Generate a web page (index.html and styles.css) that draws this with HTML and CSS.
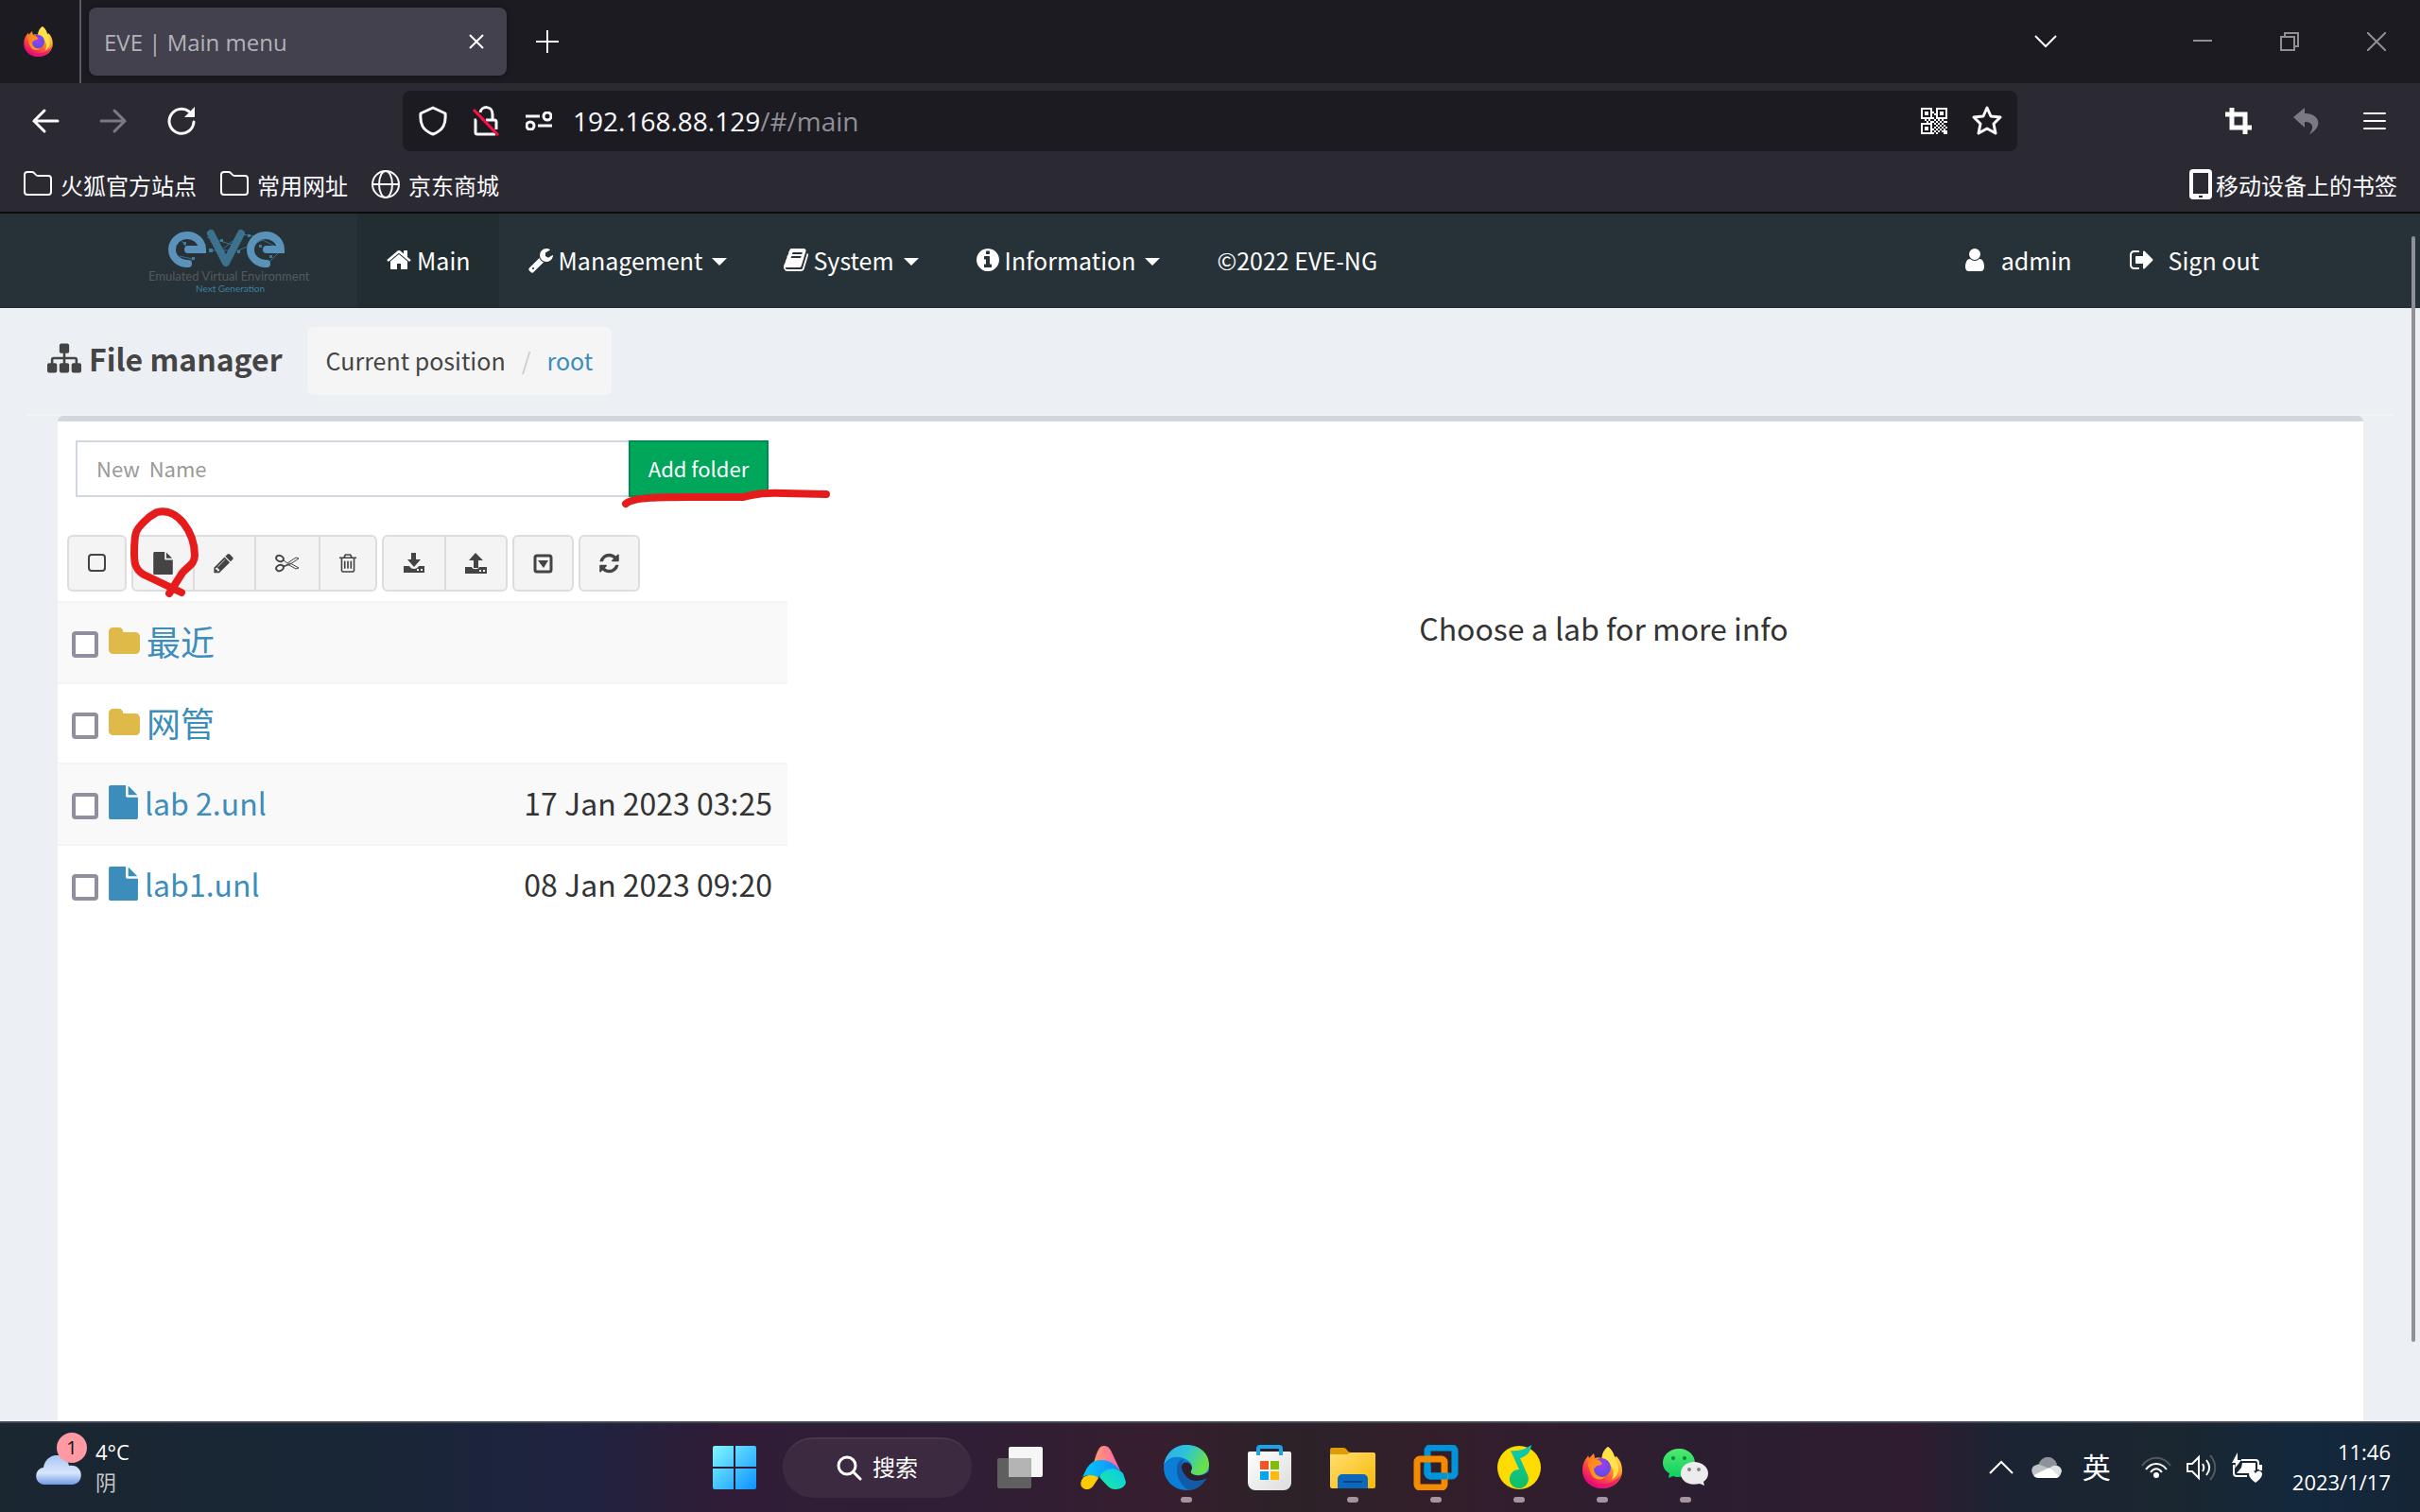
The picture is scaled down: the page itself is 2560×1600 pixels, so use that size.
FILE: index.html
```html
<!DOCTYPE html>
<html lang="zh-CN">
<head>
<meta charset="utf-8">
<title>EVE | Main menu</title>
<link rel="stylesheet" href="styles.css">
</head>
<body>
<svg class="defs" width="0" height="0" aria-hidden="true">
  <defs>
    <linearGradient id="ffFlame" x1="0.85" y1="0.05" x2="0.2" y2="0.95"><stop offset="0" stop-color="#fff44f"/><stop offset=".35" stop-color="#ffa52a"/><stop offset=".65" stop-color="#ff4f3e"/><stop offset="1" stop-color="#e4007c"/></linearGradient>
    <radialGradient id="ffGlobe" cx=".5" cy=".35" r=".65"><stop offset="0" stop-color="#a03cf5"/><stop offset="1" stop-color="#5b4ee0"/></radialGradient>
    <linearGradient id="ffHead" x1="0" y1="0" x2="1" y2="1"><stop offset="0" stop-color="#ff7a1c"/><stop offset="1" stop-color="#ffa61e"/></linearGradient>
    <linearGradient id="winBlue" x1="0" y1="0" x2="46" y2="46" gradientUnits="userSpaceOnUse"><stop offset="0" stop-color="#82f8ff"/><stop offset="1" stop-color="#0c92ff"/></linearGradient>
    <linearGradient id="edgeTop" x1="0" y1="0" x2="1" y2=".4"><stop offset="0" stop-color="#2eaaf0"/><stop offset=".5" stop-color="#2cc4d8"/><stop offset="1" stop-color="#68e04a"/></linearGradient>
    <linearGradient id="storeBag" x1="0" y1="0" x2="1" y2="1"><stop offset="0" stop-color="#fff"/><stop offset="1" stop-color="#dcdcdc"/></linearGradient>
    <linearGradient id="folderY" x1="0" y1="0" x2="1" y2="1"><stop offset="0" stop-color="#ffdf70"/><stop offset="1" stop-color="#fab806"/></linearGradient>
    <linearGradient id="noteG" x1="0" y1="0" x2="0" y2="1"><stop offset="0" stop-color="#0fc9b8"/><stop offset="1" stop-color="#11bf62"/></linearGradient>
    <linearGradient id="aPink" x1="0" y1="0" x2="1" y2="0"><stop offset="0" stop-color="#ff9d70"/><stop offset="1" stop-color="#ff61ad"/></linearGradient>
    <linearGradient id="aBlue" x1="0" y1="0" x2="1" y2="0"><stop offset="0" stop-color="#00cdf5"/><stop offset="1" stop-color="#1a86ff"/></linearGradient>
    <linearGradient id="aTeal" x1="0" y1="1" x2="1" y2="0"><stop offset="0" stop-color="#1de9a0"/><stop offset="1" stop-color="#07cbea"/></linearGradient>
    <linearGradient id="cloudB" x1="0" y1="0" x2="0" y2="1"><stop offset="0" stop-color="#a9c4f5"/><stop offset=".6" stop-color="#d8e6fb"/><stop offset="1" stop-color="#6f9be8"/></linearGradient>
    <linearGradient id="chatG" x1="0" y1="0" x2="0" y2="1"><stop offset="0" stop-color="#4fea6d"/><stop offset="1" stop-color="#0dcf62"/></linearGradient>
    <symbol id="firefox" viewBox="0 0 42 44">
      <path fill="url(#ffFlame)" d="M27 0c4 3 6 7 7 11l2-1c4 4 6 9 6 15 0 11-9 19-21 19S0 36 0 25c0-6 2-11 5-14l1-2 1 3 5-5 1 5c2-1 5-1 7 0 1-5 4-9 7-12z"/>
      <path fill="#e4107c" opacity=".7" d="M1 29c4 8 12 11 20 10 9 0 16-4 20-10-2 9-10 15-20 15S3 38 1 29z"/>
      <path fill="#ffe14a" d="M27 0c7 5 6 11 9 15 4 8 2 16-5 20 3-6 2-11-1-15-3-5-9-6-9-10 0-4 3-8 6-10z"/>
      <circle cx="20" cy="22" r="10" fill="url(#ffGlobe)"/>
      <path fill="url(#ffHead)" d="M5 11l3 2 4-5 1 5c4 0 7 3 8 5-2 1-3 2-6 2 0 2-3 2-3 4 1 6 6 9 12 8-4 4-11 3-14-2C7 25 5 17 5 11z"/>
    </symbol>
    <symbol id="file" viewBox="128 0 1536 1792"><path d="M1152 512v-472q22 14 36 28l408 408q14 14 28 36h-472zm-128 32q0 40 28 68t68 28h544v1056q0 40-28 68t-68 28h-1344q-40 0-68-28t-28-68v-1600q0-40 28-68t68-28h800v544z"/></symbol>
    <symbol id="folder" viewBox="64 128 1664 1408"><path d="M1728 608v704q0 92-66 158t-158 66h-1216q-92 0-158-66t-66-158v-960q0-92 66-158t158-66h320q92 0 158 66t66 158v32h672q92 0 158 66t66 158z"/></symbol>
    <symbol id="bmfolder" viewBox="0 0 32 32"><path fill="none" stroke="#fbfbfe" stroke-width="2" stroke-linejoin="round" d="M2 24V6a3 3 0 0 1 3-3h5c3 0 3 4 6 4h11a3 3 0 0 1 3 3v14a3 3 0 0 1-3 3H5a3 3 0 0 1-3-3z"/></symbol>
  </defs>
</svg>

<header class="browser">
  <div class="tabs">
    <div class="brand"><svg width="31" height="32"><use href="#firefox"/></svg></div>
    <div class="tab"><span>EVE | Main menu</span><button class="bare close" aria-label="Close tab"><svg width="16" height="16" viewBox="0 0 16 16" fill="none" stroke="#fbfbfe" stroke-width="2"><path d="M1 1l14 14M15 1L1 15"/></svg></button></div>
    <button class="bare" aria-label="New tab"><svg width="24" height="24" viewBox="0 0 24 24" stroke="#fbfbfe" stroke-width="2"><path d="M12 0v24M0 12h24"/></svg></button>
    <div class="winctl">
      <button class="bare list" aria-label="List all tabs"><svg width="24" height="14" viewBox="0 0 24 14" fill="none" stroke="#fbfbfe" stroke-width="2"><path d="M1 1l11 11L23 1"/></svg></button>
      <button class="bare" aria-label="Minimize"><svg width="20" height="20" viewBox="0 0 20 20" stroke="#8f8f94" stroke-width="2"><path d="M0 9h20"/></svg></button>
      <button class="bare" aria-label="Restore"><svg width="20" height="20" viewBox="0 0 20 20" fill="none" stroke="#8f8f94" stroke-width="2"><path d="M1 5h14v14H1zM5 5V1h14v14h-4"/></svg></button>
      <button class="bare" aria-label="Close"><svg width="20" height="20" viewBox="0 0 20 20" stroke="#8f8f94" stroke-width="2"><path d="M0 0l20 20M20 0L0 20"/></svg></button>
    </div>
  </div>
  <div class="toolbar">
    <button class="bare" aria-label="Back"><svg width="30" height="28" viewBox="0 0 30 28" fill="none" stroke="#fbfbfe" stroke-width="3" stroke-linecap="round"><path d="M28 14H3M14 3L3 14l11 11"/></svg></button>
    <button class="bare" aria-label="Forward"><svg width="30" height="28" viewBox="0 0 30 28" fill="none" stroke="#7b7a83" stroke-width="3" stroke-linecap="round"><path d="M2 14h25M16 3l11 11-11 11"/></svg></button>
    <button class="bare" aria-label="Reload"><svg width="30" height="30" viewBox="0 0 30 30"><path fill="none" stroke="#fbfbfe" stroke-width="3" stroke-linecap="round" d="M28 16a13 13 0 1 1-5-11"/><path fill="#fbfbfe" d="M29 0v10a1 1 0 0 1-1 1H18z"/></svg></button>
    <form class="url">
      <button type="button" class="bare" aria-label="Tracking protection"><svg width="30" height="32" viewBox="0 0 30 32" fill="none" stroke="#fbfbfe" stroke-width="3" stroke-linejoin="round"><path d="M15 2l13 6c1 11-2 18-13 22C4 26 1 19 2 8z"/></svg></button>
      <button type="button" class="bare" aria-label="Connection not secure"><svg width="28" height="32" viewBox="0 0 28 32" fill="none" stroke="#fbfbfe" stroke-width="3"><path d="M8 7c1-7 13-8 13 2v6M4 15h-1v13a2 2 0 0 0 2 2h19M14 15h9a2 2 0 0 1 2 2v8"/><path stroke="#ff0f43" d="M1 4l26 27"/></svg></button>
      <button type="button" class="bare" aria-label="Permissions"><svg width="28" height="20" viewBox="0 0 28 20" fill="none" stroke="#fbfbfe" stroke-width="3"><path d="M0 5h15M13 15h15"/><circle cx="23" cy="5" r="4"/><circle cx="5" cy="15" r="4"/></svg></button>
      <p class="address">192.168.88.129<span>/#/main</span></p>
      <button type="button" class="bare" aria-label="QR code"><svg width="28" height="28" viewBox="0 0 14 14" fill="#fbfbfe"><path fill-rule="evenodd" d="M0 0h6v6H0zM1 1v4h4V1zM8 0h6v6H8zM9 1v4h4V1zM0 8h6v6H0zM1 9v4h4V9z"/><path d="M2 2h2v2H2zM10 2h2v2h-2zM2 10h2v2H2zM6 2h1v1H6zM7 3h1v1H7zM6 5h1v1H6zM2 6h1v1H2zM4 6h1v1H4zM3 7h1v1H3zM5 7h1v1H5zM7 6h1v1H7zM9 6h1v1H9zM11 6h1v1h-1zM6 7h1v1H6zM8 7h1v1H8zM10 7h1v1h-1zM12 7h2v1h-2zM7 8h1v1H7zM9 8h1v1H9zM11 8h1v1h-1zM8 9h1v1H8zM10 9h1v1h-1zM12 9h1v1h-1zM7 10h1v1H7zM9 10h1v1H9zM11 10h1v1h-1zM13 10h1v1h-1zM6 11h1v1H6zM8 11h1v1H8zM10 11h1v1h-1zM12 11h1v1h-1zM7 12h1v1H7zM9 12h1v1H9zM11 12h1v1h-1zM6 13h1v1H6zM8 13h1v1H8zM12 12h2v2h-2z"/></svg></button>
      <button type="button" class="bare" aria-label="Bookmark this page"><svg width="32" height="32" viewBox="0 0 32 32" fill="none" stroke="#fbfbfe" stroke-width="3" stroke-linejoin="round"><path d="M16 2l4 9 10 1-7 7 2 10-9-5-9 5 2-10-7-7 10-1z"/></svg></button>
    </form>
    <button class="bare" aria-label="Screenshot"><svg width="28" height="28" viewBox="0 0 28 28" fill="none" stroke="#fbfbfe" stroke-width="5"><path d="M7 0v21h21M0 7h21v21"/></svg></button>
    <button class="bare" aria-label="Undo"><svg width="28" height="28" viewBox="0 0 28 28" fill="#7b7a83"><path d="M12 0v6c16 0 20 14 5 22 6-8 3-13-5-13v6L0 10z"/></svg></button>
    <button class="bare" aria-label="Menu"><svg width="24" height="20" viewBox="0 0 24 20" stroke="#fbfbfe" stroke-width="2" stroke-linecap="round"><path d="M1 2h22M1 10h22M1 18h22"/></svg></button>
  </div>
  <nav class="bookmarks">
    <a href="#"><svg width="32" height="32"><use href="#bmfolder"/></svg>火狐官方站点</a>
    <a href="#"><svg width="32" height="32"><use href="#bmfolder"/></svg>常用网址</a>
    <a href="#"><svg width="32" height="32" viewBox="0 0 32 32" fill="none" stroke="#fbfbfe" stroke-width="2"><circle cx="16" cy="16" r="14"/><ellipse cx="16" cy="16" rx="7" ry="14"/><path d="M2 16h28"/></svg>京东商城</a>
    <a href="#" class="mobile"><svg width="24" height="32" viewBox="0 0 24 32"><path fill="#fbfbfe" fill-rule="evenodd" d="M4 0h16a4 4 0 0 1 4 4v24a4 4 0 0 1-4 4H4a4 4 0 0 1-4-4V4a4 4 0 0 1 4-4zm0 4v22h16V4zm6 24v2h4v-2z"/></svg>移动设备上的书签</a>
  </nav>
</header>

<div class="page">
  <header class="eve">
    <a href="#" class="logo" aria-label="EVE"><svg width="184" height="74" viewBox="155 236 184 74">
      <g stroke="#3d6f8c" stroke-width="1" fill="none"><path d="M219 251l27 8M190 271l13 3M192 255l5 6M204 274l-6 8M222 265h10l20 0 26-11 20 10M256 248l20 3M300 262l-16 16M246 255l-12 10"/></g>
      <g fill="#3f7c9a"><path d="M221 263h4v4h-4zM233 253h3v3h-3zM262 248h3v3h-3zM251 265h3v3h-3zM274 259h3v3h-3zM285 270h3v3h-3zM203 272h3v3h-3zM194 256h3v3h-3z"/></g>
      <path d="M223 247l16 31 16-31" fill="none" stroke="#3c728f" stroke-width="8" stroke-linecap="round" stroke-linejoin="round"/>
      <g fill="none" stroke="#5b92ba" stroke-width="8" stroke-linecap="round"><path d="M199 264h15a16 15 0 1 0-15 15"/><path d="M282 264h15a16 15 0 1 0-15 15"/></g>
      <text x="157" y="297" class="lg1">Emulated Virtual Environment</text>
      <text x="207" y="309" class="lg2">Next Generation</text>
    </svg></a>
    <nav>
      <a href="#" class="active"><svg width="28" height="28" viewBox="0 0 1792 1792"><path d="M1472 992v480q0 26-19 45t-45 19h-384v-384h-256v384h-384q-26 0-45-19t-19-45v-480q0-1 .5-3t.5-3l575-474 575 474q1 2 1 6zm223-69l-62 74q-8 9-21 11h-3q-13 0-21-7l-692-577-692 577q-12 8-24 7-13-2-21-11l-62-74q-8-10-7-23.5t11-21.5l719-599q32-26 76-26t76 26l244 204v-195q0-14 9-23t23-9h192q14 0 23 9t9 23v408l219 182q10 8 11 21.5t-7 23.5z"/></svg>Main</a>
      <a href="#"><svg width="28" height="28" viewBox="0 0 1792 1792"><path d="M448 1472q0-26-19-45t-45-19-45 19-19 45 19 45 45 19 45-19 19-45zm644-420l-682 682q-37 37-90 37-52 0-91-37l-106-108q-38-36-38-90 0-53 38-91l681-681q39 98 114.5 173.5t173.5 114.5zm634-435q0 39-23 106-47 134-164.5 217.5t-258.5 83.5q-185 0-316.5-131.5t-131.5-316.5 131.5-316.5 316.5-131.5q58 0 121.5 16.5t107.5 46.5q16 11 16 28t-16 28l-293 169v224l193 107q5-3 79-48.5t135.5-81 70.5-35.5q15 0 23.5 10t8.5 25z"/></svg>Management<i class="caret"></i></a>
      <a href="#"><svg width="26" height="28" viewBox="64 0 1664 1792"><path d="M1703 478q40 57 18 129l-275 906q-19 64-76.5 107.5t-122.5 43.5h-923q-77 0-148.5-53.5t-99.5-131.5q-24-67-2-127 0-4 3-27t4-37q1-8-3-21.5t-3-19.5q2-11 8-21t16.5-23.5 16.5-23.5q23-38 45-91.5t30-91.5q3-10 .5-30t-.5-28q3-11 17-28t17-23q21-36 42-92t25-90q1-9-2.5-32t.5-28q4-13 22-30.5t22-22.5q19-26 42.5-84.5t27.5-96.5q1-8-3-25.5t-2-26.5q2-8 9-18t18-23 17-21q8-12 16.5-30.5t15-35 16-36 19.5-32 26.5-23.5 36-11.5 47.5 5.5l-1 3q38-9 51-9h761q74 0 114 56t18 130l-274 906q-36 119-71.5 153.5t-128.5 34.5h-869q-27 0-38 15-11 16-1 43 24 70 144 70h923q29 0 56-15.5t35-41.5l300-987q7-22 5-57 38 15 59 43zm-1064 2q-4 13 2 22.5t20 9.5h608q13 0 25.5-9.5t16.5-22.5l21-64q4-13-2-22.5t-20-9.5h-608q-13 0-25.5 9.5t-16.5 22.5zm-83 256q-4 13 2 22.5t20 9.5h608q13 0 25.5-9.5t16.5-22.5l21-64q4-13-2-22.5t-20-9.5h-608q-13 0-25.5 9.5t-16.5 22.5z"/></svg>System<i class="caret"></i></a>
      <a href="#"><svg width="26" height="28" viewBox="64 0 1664 1792"><path d="M1152 1376v-160q0-14-9-23t-23-9h-96v-512q0-14-9-23t-23-9h-320q-14 0-23 9t-9 23v160q0 14 9 23t23 9h96v320h-96q-14 0-23 9t-9 23v160q0 14 9 23t23 9h448q14 0 23-9t9-23zm-128-896v-160q0-14-9-23t-23-9h-192q-14 0-23 9t-9 23v160q0 14 9 23t23 9h192q14 0 23-9t9-23zm640 416q0 209-103 385.5t-279.5 279.5-385.5 103-385.5-103-279.5-279.5-103-385.5 103-385.5 279.5-279.5 385.5-103 385.5 103 279.5 279.5 103 385.5z"/></svg>Information<i class="caret"></i></a>
      <a href="#">©2022 EVE-NG</a>
    </nav>
    <nav class="account">
      <a href="#"><svg width="28" height="28" viewBox="0 0 1792 1792"><path d="M1536 1399q0 109-62.5 187t-150.5 78h-854q-88 0-150.5-78t-62.5-187q0-85 8.5-160.5t31.5-152 58.5-131 94-89 134.5-34.5q131 128 313 128t313-128q76 0 134.5 34.5t94 89 58.5 131 31.5 152 8.5 160.5zm-256-887q0 159-112.5 271.5t-271.5 112.5-271.5-112.5-112.5-271.5 112.5-271.5 271.5-112.5 271.5 112.5 112.5 271.5z"/></svg>admin</a>
      <a href="#"><svg width="28" height="28" viewBox="0 0 1792 1792"><path d="M704 1440q0 4 1 20t.5 26.5-3 23.5-10 19.5-20.5 6.5h-320q-119 0-203.5-84.5t-84.5-203.5v-704q0-119 84.5-203.5t203.5-84.5h320q13 0 22.5 9.5t9.5 22.5q0 4 1 20t.5 26.5-3 23.5-10 19.5-20.5 6.5h-320q-66 0-113 47t-47 113v704q0 66 47 113t113 47h312l11.5 1 11.5 3 8 5.5 7 9 2 13.5zm928-544q0 26-19 45l-544 544q-19 19-45 19t-45-19-19-45v-288h-448q-26 0-45-19t-19-45v-384q0-26 19-45t45-19h448v-288q0-26 19-45t45-19 45 19l544 544q19 19 19 45z"/></svg>Sign out</a>
    </nav>
  </header>

  <section class="heading">
    <h1><svg width="36" height="36" viewBox="0 0 1792 1792"><path d="M1792 1248v320q0 40-28 68t-68 28h-320q-40 0-68-28t-28-68v-320q0-40 28-68t68-28h96v-192h-512v192h96q40 0 68 28t28 68v320q0 40-28 68t-68 28h-320q-40 0-68-28t-28-68v-320q0-40 28-68t68-28h96v-192h-512v192h96q40 0 68 28t28 68v320q0 40-28 68t-68 28h-320q-40 0-68-28t-28-68v-320q0-40 28-68t68-28h96v-192q0-52 38-90t90-38h512v-192h-96q-40 0-68-28t-28-68v-320q0-40 28-68t68-28h320q40 0 68 28t28 68v320q0 40-28 68t-68 28h-96v192h512q52 0 90 38t38 90v192h96q40 0 68 28t28 68z"/></svg>File manager</h1>
    <p class="crumbs"><span>Current position</span><i>/</i><a href="#">root</a></p>
  </section>

  <main class="box">
    <section class="files">
      <form class="newfolder"><input type="text" placeholder="New  Name" aria-label="New Name"><button type="button">Add folder</button></form>
      <div class="actions">
        <div class="group"><button aria-label="Select all"><svg class="line" width="19" height="24" viewBox="0 0 19 24"><rect x="1" y="3" width="17" height="17" rx="3"/></svg></button></div>
        <div class="group">
          <button aria-label="New lab"><svg width="23" height="24"><use href="#file"/></svg></button>
          <button aria-label="Rename"><svg width="23" height="24" viewBox="128 0 1664 1792"><path d="M491 1536l91-91-235-235-91 91v107h128v128h107zm523-928q0-22-22-22-10 0-17 7l-542 542q-7 7-7 17 0 22 22 22 10 0 17-7l542-542q7-7 7-17zm-54-192l416 416-832 832h-416v-416zm683 96q0 53-37 90l-166 166-416-416 166-165q36-38 90-38 53 0 91 38l235 234q37 39 37 91z"/></svg></button>
          <button aria-label="Cut"><svg class="line" width="26" height="24" viewBox="0 0 26 24"><ellipse cx="5" cy="7" rx="4" ry="3" transform="rotate(20 5 7)"/><ellipse cx="5" cy="17" rx="4" ry="3" transform="rotate(-20 5 17)"/><path stroke-width="1" d="M9 9l4 3 9-6 3 1-9 6-7 3M9 15l5-2 2-1 9 5-3 1-9-5"/></svg></button>
          <button aria-label="Delete"><svg width="18" height="24" viewBox="192 0 1408 1792"><path d="M704 736v576q0 14-9 23t-23 9h-64q-14 0-23-9t-9-23v-576q0-14 9-23t23-9h64q14 0 23 9t9 23zm256 0v576q0 14-9 23t-23 9h-64q-14 0-23-9t-9-23v-576q0-14 9-23t23-9h64q14 0 23 9t9 23zm256 0v576q0 14-9 23t-23 9h-64q-14 0-23-9t-9-23v-576q0-14 9-23t23-9h64q14 0 23 9t9 23zm128 724v-948h-896v948q0 22 7 40.5t14.5 27 10.5 8.5h832q3 0 10.5-8.5t14.5-27 7-40.5zm-672-1076h448l-48-117q-7-9-17-11h-317q-10 2-17 11zm928 32v64q0 14-9 23t-23 9h-96v948q0 83-47 143.5t-113 60.5h-832q-66 0-113-58.5t-47-141.5v-952h-96q-14 0-23-9t-9-23v-64q0-14 9-23t23-9h309l70-167q15-37 54-63t79-26h320q40 0 79 26t54 63l70 167h309q14 0 23 9t9 23z"/></svg></button>
        </div>
        <div class="group">
          <button aria-label="Import"><svg width="24" height="24" viewBox="0 0 24 24"><path fill-rule="evenodd" d="M9 1h5v7h5l-7 8-7-8h4zM1 15h6c2 4 8 4 10 0h6v7H1zM15 18v2h2v-2zm4 0v2h2v-2z"/></svg></button>
          <button aria-label="Export"><svg width="23" height="24" viewBox="0 0 23 24"><path fill-rule="evenodd" d="M9 17h5V9h5L11 1 4 9h5zM0 16h7c1 3 7 3 8 0h8v7H0zM15 19v2h2v-2zm4 0v2h2v-2z"/></svg></button>
        </div>
        <div class="group"><button aria-label="More"><svg width="21" height="24" viewBox="0 0 21 24"><rect x="2" y="4" width="17" height="17" rx="2" fill="none" stroke="#444" stroke-width="3"/><path d="M5 9h11l-5 8z"/></svg></button></div>
        <div class="group"><button aria-label="Refresh"><svg width="21" height="24" viewBox="128 0 1536 1792"><path d="M1639 1056q0 5-1 7-64 268-268 434.5t-478 166.5q-146 0-282.5-55t-243.5-157l-129 129q-19 19-45 19t-45-19-19-45v-448q0-26 19-45t45-19h448q26 0 45 19t19 45-19 45l-137 137q71 66 161 102t187 36q134 0 250-65t186-179q11-17 53-117 8-23 30-23h192q13 0 22.5 9.5t9.5 22.5zm25-800v448q0 26-19 45t-45 19h-448q-26 0-45-19t-19-45 19-45l138-138q-148-137-349-137-134 0-250 65t-186 179q-11 17-53 117-8 23-30 23h-199q-13 0-22.5-9.5t-9.5-22.5v-7q65-268 270-434.5t480-166.5q146 0 284 55.5t245 156.5l130-129q19-19 45-19t45 19 19 45z"/></svg></button></div>
      </div>
      <table>
        <tr><td><div class="name"><input type="checkbox" aria-label="最近"><svg class="fold" width="33" height="28"><use href="#folder"/></svg><a href="#" class="cjk">最近</a></div></td><td></td></tr>
        <tr><td><div class="name"><input type="checkbox" aria-label="网管"><svg class="fold" width="33" height="28"><use href="#folder"/></svg><a href="#" class="cjk">网管</a></div></td><td></td></tr>
        <tr><td><div class="name"><input type="checkbox" aria-label="lab 2.unl"><svg class="doc" width="31" height="36"><use href="#file"/></svg><a href="#">lab 2.unl</a></div></td><td>17 Jan 2023 03:25</td></tr>
        <tr><td><div class="name"><input type="checkbox" aria-label="lab1.unl"><svg class="doc" width="31" height="36"><use href="#file"/></svg><a href="#">lab1.unl</a></div></td><td>08 Jan 2023 09:20</td></tr>
      </table>
    </section>
    <section class="info">Choose a lab for more info</section>
  </main>
  <div class="scroll"></div>
</div>

<footer class="taskbar">
  <div class="weather">
    <div class="wicon"><svg width="48" height="31" viewBox="0 0 48 31"><path fill="url(#cloudB)" d="M9 31C-3 30-2 14 8 13 10-3 32-5 35 11c16-2 17 19 3 20z"/></svg><b>1</b></div>
    <p>4°C<br><span>阴</span></p>
  </div>
  <div class="apps">
    <button class="bare" aria-label="Start"><svg width="46" height="46" viewBox="0 0 46 46" fill="url(#winBlue)"><path d="M2 0h20v22H0V2a2 2 0 0 1 2-2zM24 0h20a2 2 0 0 1 2 2v20H24zM0 24h22v22H2a2 2 0 0 1-2-2zM24 24h22v20a2 2 0 0 1-2 2H24z"/></svg></button>
    <button class="search"><svg width="27" height="27" viewBox="0 0 27 27" fill="none" stroke="#fff" stroke-width="3" stroke-linecap="round"><circle cx="11" cy="11" r="9"/><path d="M18 18l7 7"/></svg>搜索</button>
    <button class="bare" aria-label="Task view"><svg width="48" height="44" viewBox="0 0 48 44"><rect x="12" width="36" height="32" rx="2" fill="#f6f6f6"/><rect y="12" width="36" height="32" rx="2" fill="#5f5f5f"/><path d="M12 12h22a2 2 0 0 1 2 2v18H12z" fill="#b4b4b4"/></svg></button>
    <button class="bare" aria-label="App"><svg width="48" height="46" viewBox="0 0 48 46" fill="none" stroke-linecap="round"><path fill="url(#aPink)" d="M14 18C18 4 20 0 25 0s7 4 9 9l8 17-14-8z"/><path stroke="url(#aTeal)" stroke-width="13" d="M26 28l11 11"/><path fill="url(#aTeal)" d="M20 33c5-9 16-13 25-4l3 9c0 4-4 8-11 8-6 0-8-3-17-13z"/><path fill="url(#aBlue)" d="M2 34c4-9 7-19 20-19 11 0 17 7 20 12-12-8-20 2-25 9-4-5-11-7-15-2z"/><path fill="#ffcb05" d="M2 35c4-6 13-4 17-1l-6 9c-6 7-17 1-11-8z"/></svg></button>
    <button class="bare on" aria-label="Edge"><svg width="48" height="48" viewBox="0 0 48 48"><circle cx="24" cy="24" r="24" fill="#0b7fd8"/><path fill="url(#edgeTop)" d="M0 22C2 8 12 0 24 0c14 0 24 9 24 21 0 8-6 11-12 11-5 0-9-2-7-5 2-4 1-10-8-13C12 11 3 14 0 22z"/><path fill="#135ba8" d="M14 26c0-7 3-11 8-11-5 5-3 12 1 17 6 7 15 8 21 4-3 7-9 11-16 12C20 46 14 36 14 26z"/><path fill="#2e1d2d" d="M20 20c3-3 9-1 10 4 0 2-2 4-1 6 5 4 13 3 19-2 1 3-1 6-4 8-9 4-18 2-22-5-3-4-4-8-2-11z"/></svg></button>
    <button class="bare" aria-label="Store"><svg width="46" height="48" viewBox="0 0 46 48"><path fill="url(#storeBag)" d="M0 9a2 2 0 0 1 2-2h42a2 2 0 0 1 2 2v31a8 8 0 0 1-8 8H8a8 8 0 0 1-8-8z"/><path fill="none" stroke="#18a4ef" stroke-width="4" d="M11 11V4a2 2 0 0 1 2-2h20a2 2 0 0 1 2 2v7"/><path fill="#f35325" d="M13 17h9v9h-9z"/><path fill="#81bc06" d="M24 17h9v9h-9z"/><path fill="#05a6f0" d="M13 28h9v9h-9z"/><path fill="#ffba08" d="M24 28h9v9h-9z"/></svg></button>
    <button class="bare on" aria-label="Explorer"><svg width="48" height="43" viewBox="0 0 48 43"><path fill="#e09c06" d="M0 2a2 2 0 0 1 2-2h12c4 0 4 5 8 5v8H0z"/><path fill="url(#folderY)" d="M0 7h18l4-2h24a2 2 0 0 1 2 2v34a2 2 0 0 1-2 2H2a2 2 0 0 1-2-2z"/><path fill="#0b68bb" d="M8 43V33a5 5 0 0 1 5-5h22a5 5 0 0 1 5 5v10z"/><path stroke="#0b4485" stroke-width="2" d="M14 36h20"/></svg></button>
    <button class="bare on" aria-label="VMware"><svg width="48" height="48" viewBox="0 0 48 48" fill="none" stroke-width="7"><rect x="15" y="3" width="29" height="30" rx="3" stroke="#0095da"/><rect x="4" y="15" width="29" height="30" rx="3" stroke="#f38b00"/><path stroke="#0095da" d="M15 22v8a3 3 0 0 0 3 3h18"/></svg></button>
    <button class="bare on" aria-label="Music"><svg width="48" height="48" viewBox="0 0 48 48"><circle cx="24" cy="24" r="23" fill="#ffdc00"/><path fill="url(#noteG)" d="M15 6c8 1 15-1 22-6-1 8-5 12-12 14l8 18a10 10 0 1 1-9-6z"/></svg></button>
    <button class="bare on" aria-label="Firefox"><svg width="42" height="44"><use href="#firefox"/></svg></button>
    <button class="bare on" aria-label="WeChat"><svg width="48" height="40" viewBox="0 0 48 40"><path fill="url(#chatG)" d="M17 0c10 0 17 7 17 15S27 30 17 30c-2 0-4 0-6-1l-5 2 1-5C3 24 0 20 0 15 0 7 7 0 17 0z"/><path fill="#ececec" d="M33 14c8 0 15 5 15 12 0 4-2 7-5 9l1 4-5-2c-12 3-20-3-20-11 0-7 6-12 14-12z"/><g fill="#118244"><circle cx="11" cy="10" r="2"/><circle cx="23" cy="10" r="2"/></g><g fill="#858585"><circle cx="28" cy="22" r="2"/><circle cx="38" cy="22" r="2"/></g></svg></button>
  </div>
  <div class="tray">
    <svg width="26" height="16" viewBox="0 0 26 16" fill="none" stroke="#fff" stroke-width="2"><path d="M1 14L13 2l12 12"/></svg>
    <svg class="cloud" width="32" height="22" viewBox="0 0 32 22"><path fill="#8f9399" d="M7 9C10-3 24-3 27 8l-8 4z"/><path fill="#bfc2c5" d="M2 19C-3 11 4 7 9 8l10 4z"/><path fill="#e0e1e3" d="M19 12c5-6 13-3 13 3l-2 5z"/><path fill="#fff" d="M2 19l17-8 11 9-3 2H7c-2 0-4-1-5-3z"/></svg>
    <span class="ime">英</span>
    <svg class="wifi" width="32" height="24" viewBox="0 0 32 24" fill="none" stroke="#fff" stroke-width="2"><path stroke="#4d5860" d="M1 10c8-11 22-11 30 0"/><path d="M5 14c6-8 16-8 22 0M10 17c4-5 8-5 12 0"/><circle cx="16" cy="20" r="2" fill="#fff"/></svg>
    <svg width="32" height="28" viewBox="0 0 32 28" fill="none" stroke="#fff" stroke-width="2"><path d="M1 10h5l7-7v22l-7-7H1zM17 10c2 3 2 5 0 8M21 6c4 5 4 11 0 16"/><path stroke="#4d5860" d="M25 1c7 8 7 18 0 26"/></svg>
    <svg width="32" height="32" viewBox="0 0 32 32"><path d="M10 8h15a3 3 0 0 1 3 3v7M2 13v9a3 3 0 0 0 3 3h11" fill="none" stroke="#fff" stroke-width="2"/><path fill="#fff" d="M11 11h14v8l-7 3H5l5-6zM29 13h3v6h-3zM6 0L0 11h4l-1 6 7-9H6zM25 32c-4-3-7-6-7-9 0-4 5-5 7-1 2-4 7-3 7 1 0 3-3 6-7 9z"/></svg>
    <p class="clock">11:46<br>2023/1/17</p>
  </div>
</footer>

<svg class="marks" width="840" height="110" viewBox="60 530 840 110" fill="none" stroke="#e61c1c" stroke-width="8" stroke-linecap="round" stroke-linejoin="round" aria-hidden="true"><path d="M192 627L152 608C142 602 142 594 142 585C142 562 143 560 158 547L166 542C188 536 206 564 206 588C206 597 198 600 193 606L179 628"/><path d="M662 533C670 526 700 526 730 526L786 526C800 523 806 521 830 522L874 523"/></svg>
</body>
</html>
```
FILE: styles.css
```css
* { box-sizing: border-box; margin: 0; }
body {
  display: flex;
  flex-direction: column;
  min-height: 100vh;
  background: #ecf0f5;
  font-family: "Noto Sans CJK SC", sans-serif;
  font-size: 25px;
  color: #333;
}
a { text-decoration: none; color: inherit; }
button { font: inherit; color: inherit; }
svg { flex: none; display: block; }
.defs { position: absolute; }
.bare {
  display: flex;
  align-items: center;
  justify-content: center;
  flex: none;
  border: 0;
  padding: 0;
  background: none;
}

/* browser chrome */
.browser {
  background: #2b2a33;
  color: #fbfbfe;
  border-bottom: 2px solid #0c0c0d;
  font-family: "Open Sans", "Noto Sans CJK SC", sans-serif;
}
.tabs { display: flex; height: 88px; background: #1c1b22; }
.brand {
  display: flex;
  align-items: center;
  width: 86px;
  padding-left: 25px;
  border-right: 2px solid #5b5b60;
}
.tab {
  display: flex;
  align-items: center;
  justify-content: space-between;
  width: 442px;
  margin: 8px;
  padding: 0 24px 0 16px;
  border-radius: 8px;
  background: #42414d;
  box-shadow: 0 0 4px #111;
  color: #b2b1b8;
  font-size: 24px;
}
.tabs > .bare { width: 70px; }
.winctl { display: flex; margin-left: auto; }
.winctl .bare { width: 92px; }
.winctl .list { width: 72px; margin-right: 84px; }
.toolbar { display: flex; align-items: center; height: 80px; padding: 0 12px; }
.toolbar > .bare { width: 72px; }
.url {
  display: flex;
  flex: 1;
  align-items: center;
  height: 64px;
  margin: 0 198px;
  padding: 0 4px;
  border-radius: 8px;
  background: #1c1b22;
}
.url .bare { width: 56px; }
.address { flex: 1; padding-left: 8px; font-size: 28px; }
.address span { color: #8f8f96; }
.bookmarks {
  display: flex;
  align-items: center;
  gap: 24px;
  height: 56px;
  padding: 0 24px 2px;
  font-family: "Noto Sans CJK SC", sans-serif;
  font-size: 24px;
}
.bookmarks a { display: flex; align-items: center; gap: 8px; }
.bookmarks .mobile { margin-left: auto; gap: 4px; }

/* application header */
.page { position: relative; display: flex; flex: 1; flex-direction: column; }
.eve {
  display: flex;
  height: 100px;
  padding: 0 140px 0 155px;
  background: #263238;
  color: #fff;
}
.logo { width: 223px; padding-top: 10px; }
.lg1 { font: 13px Lato, sans-serif; fill: #56595b; }
.lg2 { font: 10px Lato, sans-serif; fill: #3f7f9f; }
.eve nav { display: flex; }
.eve nav a { display: flex; align-items: center; gap: 5px; padding: 0 30px 2px; }
.eve nav svg { fill: #fff; }
.eve nav .active { background: #222d32; }
.caret {
  margin: 4px 0 0 5px;
  border: 8px solid transparent;
  border-top-color: #fff;
  border-bottom: 0;
}
.eve .account { margin-left: auto; }
.eve .account a { gap: 14px; }

.heading {
  display: flex;
  height: 114px;
  margin: 0 28px;
  padding: 20px 0 0 22px;
  align-items: flex-start;
  border-bottom: 2px solid #f3f4f5;
  color: #444;
}
h1 { display: flex; align-items: center; gap: 8px; height: 66px; font-size: 32px; }
h1 svg { fill: #444; }
.crumbs {
  display: flex;
  align-items: center;
  height: 72px;
  margin-left: 26px;
  padding: 0 20px 2px;
  border-radius: 6px;
  background: #f5f5f5;
}
.crumbs i { margin: 0 17px; font-style: normal; color: #ccc; }
.crumbs a, .name a { color: #3c8dbc; }

/* file list */
.box {
  display: grid;
  flex: 1;
  grid-template-columns: minmax(0, 772px) 1fr;
  margin: 0 60px 0 61px;
  border-top: 6px solid #d2d6de;
  border-radius: 6px 6px 0 0;
  background: #fff;
}
.newfolder { display: flex; width: 733px; height: 60px; margin: 20px 19px 40px; }
.newfolder input {
  flex: 1;
  min-width: 0;
  padding: 0 20px 2px;
  border: 2px solid #d2d6de;
  border-right: 0;
  font: inherit;
  font-size: 22px;
}
.newfolder input::placeholder { color: #999; opacity: 1; }
.newfolder button {
  width: 148px;
  padding: 0 0 2px;
  border: 2px solid #008d4c;
  background: #00a65a;
  color: #fff;
  font-size: 22px;
}
.actions { display: flex; gap: 5px; margin: 0 10px 10px; }
.group { display: flex; }
.group button {
  height: 60px;
  padding: 0 20px;
  border: 2px solid #ddd;
  background: #f4f4f4;
}
.group button + button { margin-left: -2px; }
.group button:first-child { border-radius: 6px 0 0 6px; }
.group button:last-child { border-radius: 0 6px 6px 0; }
.group button:only-child { border-radius: 6px; }
.group svg { fill: #444; }
.group .line { fill: none; stroke: #444; stroke-width: 2; }
table { width: 100%; border-collapse: collapse; font-size: 32px; line-height: 48px; }
td { height: 86px; padding: 0 0 4px; border-top: 2px solid #f4f4f4; }
tr:nth-child(even) td { height: 85px; }
td:last-child { padding-right: 16px; text-align: right; }
tr:nth-child(odd) { background: #f9f9f9; }
.name { display: flex; align-items: center; padding-left: 15px; }
.name input {
  appearance: none;
  width: 28px;
  height: 28px;
  margin: 8px 11px 0 0;
  border: 4px solid #8f8f9d;
  border-radius: 4px;
  background: #fff;
}
.name .fold { fill: #dfba49; margin-right: 7px; }
.name .doc { fill: #3c8dbc; margin-right: 7px; }
.name .cjk { font-size: 36px; }
.info { padding: 195px 0 0 60px; font-size: 32px; text-align: center; }
.scroll {
  position: absolute;
  top: 24px;
  right: 5px;
  bottom: 84px;
  width: 4px;
  border-radius: 2px;
  background: #8f9194;
}

/* desktop taskbar */
.taskbar {
  display: grid;
  grid-template-columns: 1fr auto 1fr;
  align-items: center;
  height: 96px;
  border-top: 2px solid #43474f;
  background: linear-gradient(90deg, #1a2630 0, #192636 15%, #1f2340 24%, #301c36 30%, #2f1e36 40%, #361e2e 48%, #2c2228 53%, #331e2b 60%, #2c1e31 70%, #2f1c30 79%, #1b2433 83%, #1a2630 90%, #13283d 95%, #152536 100%);
  color: #fff;
  font-family: "Open Sans", "Noto Sans CJK SC", sans-serif;
  font-size: 22px;
  line-height: 32px;
}
.weather { display: flex; align-items: center; gap: 9px; padding: 0 0 2px 38px; }
.weather span { color: #c3c6ca; }
.wicon { position: relative; width: 54px; padding-top: 6px; }
.wicon b {
  position: absolute;
  top: -18px;
  right: 0;
  width: 32px;
  height: 32px;
  border-radius: 50%;
  background: #ff99a4;
  color: #111;
  font-size: 20px;
  font-weight: 400;
  text-align: center;
}
.apps { display: flex; align-items: center; }
.apps .bare { position: relative; width: 88px; height: 94px; }
.apps .on::after {
  content: "";
  position: absolute;
  bottom: 10px;
  width: 12px;
  height: 6px;
  border-radius: 3px;
  background: #a594a0;
}
.search {
  display: flex;
  align-items: center;
  justify-content: center;
  gap: 11px;
  width: 200px;
  height: 64px;
  margin: 0 7px;
  padding: 0 0 2px;
  border: 0;
  border-top: 2px solid #4c3648;
  border-radius: 32px;
  background: #3b2a40;
  font-size: 24px;
}
.tray { display: flex; align-items: center; justify-content: flex-end; gap: 16px; padding-right: 31px; }
.tray .cloud { margin: 0 6px 0 3px; }
.ime { font-size: 30px; }
.tray .wifi { margin-left: 16px; }
.clock { margin-left: 16px; padding-bottom: 2px; text-align: right; }
.marks { position: absolute; top: 530px; left: 60px; overflow: visible; pointer-events: none; }
```
